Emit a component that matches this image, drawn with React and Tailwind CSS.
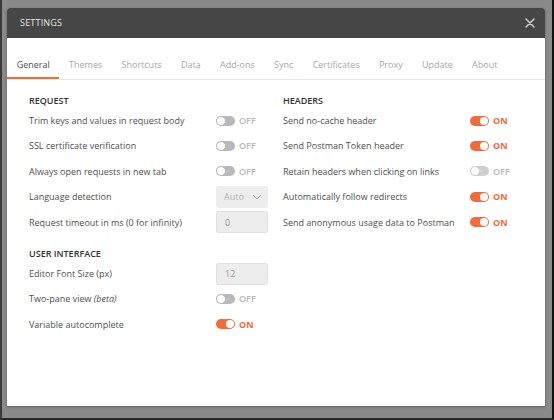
import React from 'react';

const tabs = ['General', 'Themes', 'Shortcuts', 'Data', 'Add-ons', 'Sync', 'Certificates', 'Proxy', 'Update', 'About'];

const Toggle = ({ on, light }) => (
  <div className="flex items-center gap-[4px]">
    {on ? (
      <div className="w-[19px] h-[10px] rounded-full bg-[#f26b3a] flex items-center justify-end p-[1px]">
        <div className="w-[8px] h-[8px] rounded-full bg-white" />
      </div>
    ) : (
      <div className={`w-[19px] h-[10px] rounded-full flex items-center justify-start ${light ? 'bg-[#cfcfcf]' : 'bg-[#b9b9b9]'}`}>
        <div className={`w-[10px] h-[10px] rounded-full bg-white border ${light ? 'border-[#cfcfcf]' : 'border-[#b9b9b9]'}`} />
      </div>
    )}
    <span className={on ? 'text-[#f26b3a] font-bold' : 'text-[#b8b8b8] font-semibold'}>{on ? 'ON' : 'OFF'}</span>
  </div>
);

const Row = ({ label, children }) => (
  <div className="grid grid-cols-[187px_53px] items-center h-[25.4px]">
    <div className="text-[#505050]">{label}</div>
    <div>{children}</div>
  </div>
);

const Heading = ({ children }) => (
  <div className="h-[14px] leading-[14px] font-semibold text-[#333]">{children}</div>
);

const Box = ({ children }) => (
  <div className="h-[22px] w-[52px] bg-[#ededed] border border-[#e2e2e2] rounded-[2px] flex items-center pl-[8px] text-[#9a9a9a]">
    {children}
  </div>
);

export default function App() {
  return (
    <div
      className="w-[554px] h-[420px] bg-[#8a8a8a] border-l-2 border-l-[#3a3a3a] border-r-2 border-r-[#111] border-b-2 border-b-[#2a2a2a] overflow-hidden text-[9px]"
      style={{ fontFamily: '"Open Sans", "Noto Sans", sans-serif' }}
    >
      <div className="ml-[5px] mt-[8px] w-[538px] h-[398px] bg-white rounded-t-[3px] shadow-[0_1px_3px_rgba(0,0,0,0.3)] flex flex-col">
        <div className="h-[30px] bg-[#464646] rounded-t-[3px] flex items-center justify-between pl-[13px] pr-[10px]">
          <span className="text-[#e4e4e4] text-[9px] tracking-[0.2px]">SETTINGS</span>
          <svg width="10" height="10" viewBox="0 0 10 10">
            <path d="M1 1 L9 9 M9 1 L1 9" stroke="#cfcfcf" strokeWidth="1.5" strokeLinecap="round" />
          </svg>
        </div>

        <div className="flex pt-[20px] border-b border-[#e6e6e6]">
          {tabs.map((t, i) => (
            <div
              key={t}
              className={`px-[9.65px] pb-[5px] leading-[14px] border-b-2 ${i === 0 ? 'border-[#f26b3a] text-[#505050]' : 'border-transparent text-[#a8a8a8]'}`}
            >
              {t}
            </div>
          ))}
        </div>

        <div className="flex gap-[14px] pl-[22px] pt-[14px]">
          <div className="w-[240px]">
            <Heading>REQUEST</Heading>
            <Row label="Trim keys and values in request body"><Toggle /></Row>
            <Row label="SSL certificate verification"><Toggle /></Row>
            <Row label="Always open requests in new tab"><Toggle /></Row>
            <Row label="Language detection">
              <div className="h-[22px] w-[52px] bg-[#ededed] rounded-[2px] flex items-center justify-between pl-[8px] pr-[6px] text-[#b4b4b4]">
                <span>Auto</span>
                <svg width="10" height="6" viewBox="0 0 10 6">
                  <path d="M1 1 L5 5 L9 1" stroke="#b4b4b4" strokeWidth="1" fill="none" />
                </svg>
              </div>
            </Row>
            <Row label="Request timeout in ms (0 for infinity)"><Box>0</Box></Row>

            <div className="mt-[12px]">
              <Heading>USER INTERFACE</Heading>
              <Row label="Editor Font Size (px)"><Box>12</Box></Row>
              <Row label={<span>Two-pane view <i>(beta)</i></span>}><Toggle /></Row>
              <Row label="Variable autocomplete"><Toggle on /></Row>
            </div>
          </div>

          <div className="w-[240px]">
            <Heading>HEADERS</Heading>
            <Row label="Send no-cache header"><Toggle on /></Row>
            <Row label="Send Postman Token header"><Toggle on /></Row>
            <Row label="Retain headers when clicking on links"><Toggle light /></Row>
            <Row label="Automatically follow redirects"><Toggle on /></Row>
            <Row label="Send anonymous usage data to Postman"><Toggle on /></Row>
          </div>
        </div>
      </div>
    </div>
  );
}
